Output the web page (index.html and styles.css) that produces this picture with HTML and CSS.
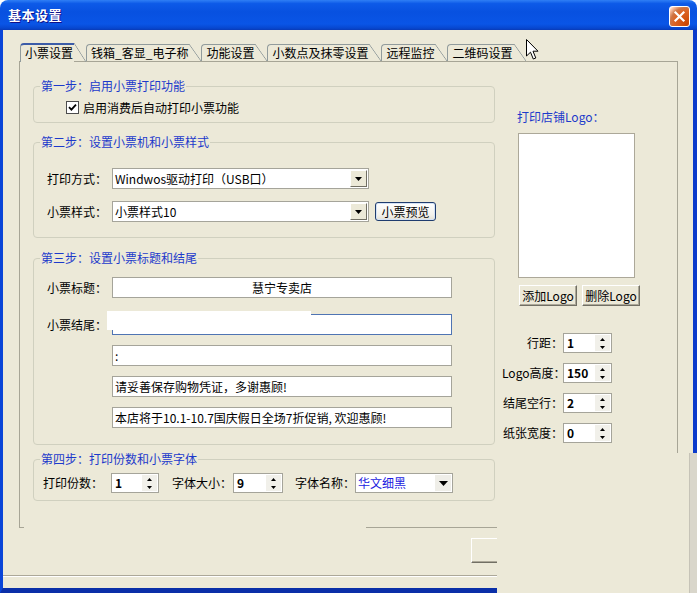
FILE: index.html
```html
<!DOCTYPE html>
<html lang="zh-CN">
<head>
<meta charset="utf-8">
<title>基本设置</title>
<link rel="stylesheet" href="styles.css">
</head>
<body>
<div class="window">
  <div class="titlebar">
    <span class="title">基本设置</span>
    <span class="close"><svg width="13" height="13" viewBox="0 0 13 13"><path d="M2.5 2.5 L10.5 10.5 M10.5 2.5 L2.5 10.5" stroke="#fff" stroke-width="2.2" stroke-linecap="square"/></svg></span>
  </div>
  <div class="client">
    <div class="tabs">
      <div class="tab active">小票设置</div>
      <div class="tab">钱箱_客显_电子称</div>
      <div class="tab">功能设置</div>
      <div class="tab">小数点及抹零设置</div>
      <div class="tab">远程监控</div>
      <div class="tab">二维码设置</div>
    </div>
    <div class="panel">
      <div class="col-left">
        <fieldset class="group g1">
          <legend>第一步<span class="colon">：</span>启用小票打印功能</legend>
          <div class="g1-body">
            <label class="check"><span class="box"><svg width="9" height="9" viewBox="0 0 9 9"><path d="M1 4.2 L3.4 6.6 L8 1.6" fill="none" stroke="#000" stroke-width="1.8"/></svg></span>启用消费后自动打印小票功能</label>
          </div>
        </fieldset>
        <fieldset class="group g2">
          <legend>第二步<span class="colon">：</span>设置小票机和小票样式</legend>
          <div class="g2-body">
            <div class="row">
              <span class="lbl">打印方式<span class="colon">：</span></span>
              <div class="combo"><span class="combo-text">Windwos驱动打印（USB口）</span><span class="drop"><svg width="7" height="4" viewBox="0 0 7 4"><path d="M0 0H7L3.5 4Z" fill="#000"/></svg></span></div>
            </div>
            <div class="row">
              <span class="lbl">小票样式<span class="colon">：</span></span>
              <div class="combo"><span class="combo-text">小票样式10</span><span class="drop"><svg width="7" height="4" viewBox="0 0 7 4"><path d="M0 0H7L3.5 4Z" fill="#000"/></svg></span></div>
              <button class="xp-btn">小票预览</button>
            </div>
          </div>
        </fieldset>
        <fieldset class="group g3">
          <legend>第三步<span class="colon">：</span>设置小票标题和结尾</legend>
          <div class="g3-body">
            <div class="row first">
              <span class="lbl">小票标题<span class="colon">：</span></span>
              <div class="field center">慧宁专卖店</div>
            </div>
            <div class="row">
              <span class="lbl">小票结尾<span class="colon">：</span></span>
              <div class="field focus"><span class="mask"></span></div>
            </div>
            <div class="row">
              <span class="lbl"></span>
              <div class="field">:</div>
            </div>
            <div class="row">
              <span class="lbl"></span>
              <div class="field">请妥善保存购物凭证，多谢惠顾!</div>
            </div>
            <div class="row">
              <span class="lbl"></span>
              <div class="field">本店将于10.1-10.7国庆假日全场7折促销, 欢迎惠顾!</div>
            </div>
          </div>
        </fieldset>
        <fieldset class="group g4">
          <legend>第四步<span class="colon">：</span>打印份数和小票字体</legend>
          <div class="g4-body">
            <span class="lbl4">打印份数<span class="colon">：</span></span>
            <div class="spin"><span class="val">1</span><span class="arrows"><svg width="5" height="3" viewBox="0 0 5 3"><path d="M0 3H5L2.5 0Z"/></svg><svg width="5" height="3" viewBox="0 0 5 3"><path d="M0 0H5L2.5 3Z"/></svg></span></div>
            <span class="lbl4 size">字体大小<span class="colon">：</span></span>
            <div class="spin wide"><span class="val">9</span><span class="arrows"><svg width="5" height="3" viewBox="0 0 5 3"><path d="M0 3H5L2.5 0Z"/></svg><svg width="5" height="3" viewBox="0 0 5 3"><path d="M0 0H5L2.5 3Z"/></svg></span></div>
            <span class="lbl4 name">字体名称<span class="colon">：</span></span>
            <div class="font-combo"><span class="font-text">华文细黑</span><span class="flat-drop"><svg width="9" height="5" viewBox="0 0 9 5"><path d="M0 0H9L4.5 5Z" fill="#000"/></svg></span></div>
          </div>
        </fieldset>
      </div>
      <div class="col-right">
        <div class="logo-title">打印店铺Logo<span class="colon">：</span></div>
        <div class="logo-box"></div>
        <div class="logo-btns">
          <button class="btn">添加Logo</button>
          <button class="btn">删除Logo</button>
        </div>
        <div class="params">
          <div class="prow"><span class="plbl">行距<span class="colon">：</span></span><div class="spin pspin"><span class="val">1</span><span class="arrows"><svg width="5" height="3" viewBox="0 0 5 3"><path d="M0 3H5L2.5 0Z"/></svg><svg width="5" height="3" viewBox="0 0 5 3"><path d="M0 0H5L2.5 3Z"/></svg></span></div></div>
          <div class="prow"><span class="plbl">Logo高度<span class="colon">：</span></span><div class="spin pspin"><span class="val">150</span><span class="arrows"><svg width="5" height="3" viewBox="0 0 5 3"><path d="M0 3H5L2.5 0Z"/></svg><svg width="5" height="3" viewBox="0 0 5 3"><path d="M0 0H5L2.5 3Z"/></svg></span></div></div>
          <div class="prow"><span class="plbl">结尾空行<span class="colon">：</span></span><div class="spin pspin"><span class="val">2</span><span class="arrows"><svg width="5" height="3" viewBox="0 0 5 3"><path d="M0 3H5L2.5 0Z"/></svg><svg width="5" height="3" viewBox="0 0 5 3"><path d="M0 0H5L2.5 3Z"/></svg></span></div></div>
          <div class="prow"><span class="plbl">纸张宽度<span class="colon">：</span></span><div class="spin pspin"><span class="val">0</span><span class="arrows"><svg width="5" height="3" viewBox="0 0 5 3"><path d="M0 3H5L2.5 0Z"/></svg><svg width="5" height="3" viewBox="0 0 5 3"><path d="M0 0H5L2.5 3Z"/></svg></span></div></div>
        </div>
      </div>
    </div>
    <div class="panel-foot"></div>
    <button class="foot-btn"></button>
    <div class="sep"></div>
  </div>
  <div class="glitch"></div>
  <svg class="cursor" width="13" height="21" viewBox="0 0 13 21"><path d="M0.5 0.5 V17 L4.5 13.2 L7.3 20 L9.8 19 L7 12.2 H12 Z" fill="#fff" stroke="#000" stroke-width="1"/></svg>
</div>
</body>
</html>
```

FILE: styles.css
```css
* { box-sizing: border-box; }
html, body { margin: 0; padding: 0; }
body {
  width: 697px;
  height: 593px;
  overflow: hidden;
  background: #ffffff;
  font-family: "Noto Sans CJK SC", "Noto Sans", sans-serif;
  font-size: 12px;
  line-height: 14px;
  color: #000;
}
.colon { font-family: "Noto Sans CJK TC", "Noto Sans CJK SC", sans-serif; }
.window {
  position: relative;
  width: 697px;
  height: 593px;
  display: flex;
  flex-direction: column;
  border-radius: 8px 8px 0 0;
  overflow: hidden;
}
.titlebar {
  flex: none;
  height: 30px;
  display: flex;
  justify-content: space-between;
  align-items: center;
  padding: 0 7px 0 8px;
  background: linear-gradient(180deg, #2f7ff5 0, #0d5ae8 12%, #0851e0 40%, #0a55e6 80%, #0747cf 94%, #0a3ab6 100%);
}
.title {
  color: #fff;
  font-weight: bold;
  font-size: 13px;
  letter-spacing: 0.5px;
  line-height: 16px;
  text-shadow: 1px 1px 0 #0f1089;
}
.close {
  width: 21px;
  height: 21px;
  margin-top: 2px;
  border: 1px solid #fff;
  border-radius: 3px;
  display: flex;
  align-items: center;
  justify-content: center;
  background: radial-gradient(circle at 90% 90%, #cc4600 0, #dc6527 55%, #cd7546 70%, #ffccb2 90%, #fff 100%);
}
.client {
  flex: 1;
  display: flex;
  flex-direction: column;
  background: #ECE9D8;
  border-left: 3px solid #0a45d8;
  border-right: 4px solid #0a3acb;
  border-bottom: 5px solid #0a2fa8;
}

/* tabs */
.tabs {
  flex: none;
  display: flex;
  align-items: flex-end;
  height: 31px;
  padding-left: 17px;
  position: relative;
  z-index: 2;
}
.tab {
  position: relative;
  height: 17px;
  padding: 0 1px 0 4px;
  margin-right: 12px;
  line-height: 16px;
  border-top: 1px solid #919b9c;
  border-left: 1px solid #919b9c;
  border-top-left-radius: 4px;
  background: #ECE9D8;
  white-space: nowrap;
}
.tab::after {
  content: "";
  position: absolute;
  top: -1px;
  right: -12px;
  width: 12px;
  height: 17px;
  background: linear-gradient(to top right, transparent calc(50% - 0.7px), #919b9c 50%, transparent calc(50% + 0.7px));
}
.tab.active {
  height: 19px;
  margin-bottom: -1px;
  border-top: 2px solid #3c5ca8;
}
.tab.active::after {
  top: -2px;
  height: 19px;
}

/* panel */
.panel {
  flex: none;
  display: flex;
  align-items: flex-start;
  margin-left: 16px;
  width: 659px;
  height: 466px;
  border: 1px solid #a7a596;
  border-bottom: 0;
}
.panel-foot {
  flex: none;
  display: flex;
  justify-content: space-between;
  margin-left: 16px;
  width: 659px;
  height: 1px;
}
.panel-foot::before { content: ""; width: 5px; background: #a7a596; }
.panel-foot::after { content: ""; width: 312px; background: #a7a596; }

.foot-btn {
  flex: none;
  margin: 10px 0 0 468px;
  width: 80px;
  height: 25px;
  padding: 0;
  border: 1px solid;
  border-color: #fff #716f64 #716f64 #fff;
  box-shadow: inset -1px -1px 0 #aca899;
  background: #ECE9D8;
}
.sep {
  flex: none;
  margin-top: 12px;
  height: 2px;
  border-top: 1px solid #aca899;
  border-bottom: 1px solid #fff;
}

/* left column */
.col-left {
  margin-left: 13px;
  width: 462px;
  padding-top: 17px;
  display: flex;
  flex-direction: column;
}
.group {
  margin: 0;
  padding: 0;
  min-width: 0;
  border: 1px solid #d0d0bf;
  border-radius: 4px;
}
.group legend {
  margin-left: 6px;
  padding: 0 1px;
  color: #1c3acb;
  line-height: 14px;
}
.g2 { margin-top: 12px; }
.g3 { margin-top: 13px; }
.g4 { margin-top: 7px; }

.g1-body { padding: 7px 0 7px 32px; }
.check {
  display: flex;
  align-items: center;
  gap: 4px;
  height: 15px;
}
.box {
  width: 13px;
  height: 13px;
  border: 1px solid #4c4c4c;
  background: #fff;
  display: flex;
  align-items: center;
  justify-content: center;
}

.g2-body {
  padding: 19px 0 15px 13px;
  display: flex;
  flex-direction: column;
  gap: 12px;
}
.row {
  display: flex;
  align-items: center;
  height: 21px;
}
.lbl {
  width: 65px;
  flex: none;
  white-space: nowrap;
}
.combo {
  width: 257px;
  height: 21px;
  display: flex;
  align-items: center;
  padding: 1px;
  border: 1px solid #a5a49a;
  background: #fff;
}
.combo-text {
  flex: 1;
  padding-left: 1px;
  line-height: 17px;
  white-space: nowrap;
}
.drop {
  width: 17px;
  height: 17px;
  display: flex;
  align-items: center;
  justify-content: center;
  background: #ECE9D8;
  border: 1px solid;
  border-color: #fff #716f64 #716f64 #fff;
}
.xp-btn {
  margin-left: 6px;
  width: 61px;
  height: 19px;
  padding: 0;
  font: inherit;
  line-height: 16px;
  border: 1px solid #1f3c6e;
  border-radius: 3px;
  background: linear-gradient(#ffffff, #f2f1ec 70%, #e3e0d4);
  box-shadow: inset 0 0 0 1px #d4e2f5;
  color: #000;
}

.g3-body {
  padding: 12px 0 16px 13px;
  display: flex;
  flex-direction: column;
  gap: 10px;
}
.g3-body .first { margin-bottom: 6px; }
.field {
  position: relative;
  width: 340px;
  height: 21px;
  padding: 0 2px;
  line-height: 19px;
  border: 1px solid #a5a49a;
  background: #fff;
  white-space: nowrap;
}
.field.center { text-align: center; }
.field.focus { border-color: #4f74b3; }
.mask {
  position: absolute;
  left: -6px;
  top: -4px;
  width: 204px;
  height: 19px;
  background: #fff;
}

.g4-body {
  padding: 7px 0 7px 9px;
  display: flex;
  align-items: center;
  height: 34px;
}
.lbl4 {
  width: 68px;
  flex: none;
  white-space: nowrap;
}
.lbl4.size { margin-left: 13px; width: 61px; }
.lbl4.name { margin-left: 12px; width: 60px; }
.spin {
  width: 48px;
  height: 20px;
  display: flex;
  padding: 1px;
  border: 1px solid #a5a49a;
  background: #fff;
}
.spin.wide { width: 50px; }
.val {
  flex: 1;
  font-weight: bold;
  line-height: 16px;
  padding-left: 2px;
}
.arrows {
  width: 15px;
  display: flex;
  flex-direction: column;
  align-items: center;
  justify-content: space-around;
  background: #f1f0ea;
}
.font-combo {
  width: 98px;
  height: 20px;
  display: flex;
  align-items: center;
  padding: 1px;
  border: 1px solid #a5a49a;
  background: #fff;
}
.font-text {
  flex: 1;
  color: #1a1ae0;
  line-height: 16px;
  padding-left: 1px;
}
.flat-drop {
  width: 16px;
  height: 16px;
  display: flex;
  align-items: center;
  justify-content: center;
  background: #efeee8;
}

/* right column */
.col-right {
  margin-left: 7px;
  padding-top: 48px;
  width: 150px;
  display: flex;
  flex-direction: column;
}
.logo-title {
  padding-left: 15px;
  color: #1c3acb;
  line-height: 14px;
  white-space: nowrap;
}
.logo-box {
  margin: 9px 0 0 16px;
  width: 117px;
  height: 145px;
  background: #fff;
  border: 1px solid #aca899;
}
.logo-btns {
  display: flex;
  gap: 5px;
  margin: 7px 0 0 17px;
}
.btn {
  width: 58px;
  height: 21px;
  padding: 0;
  font: inherit;
  line-height: 18px;
  color: #000;
  background: #ECE9D8;
  border: 1px solid;
  border-color: #fff #716f64 #716f64 #fff;
  box-shadow: inset -1px -1px 0 #aca899;
}
.params {
  margin-top: 27px;
  display: flex;
  flex-direction: column;
  gap: 10px;
}
.prow {
  display: flex;
  align-items: center;
  height: 20px;
}
.plbl {
  width: 61px;
  flex: none;
  text-align: right;
  white-space: nowrap;
}
.pspin { width: 49px; }

/* overlays */
.glitch {
  position: absolute;
  left: 497px;
  top: 453px;
  right: 0;
  bottom: 0;
  background: linear-gradient(to right, #ECE9D8 0 192px, #c6c3b7 192px 193px, #d9d6cb 193px);
}
.cursor {
  position: absolute;
  left: 526px;
  top: 39px;
}
```
